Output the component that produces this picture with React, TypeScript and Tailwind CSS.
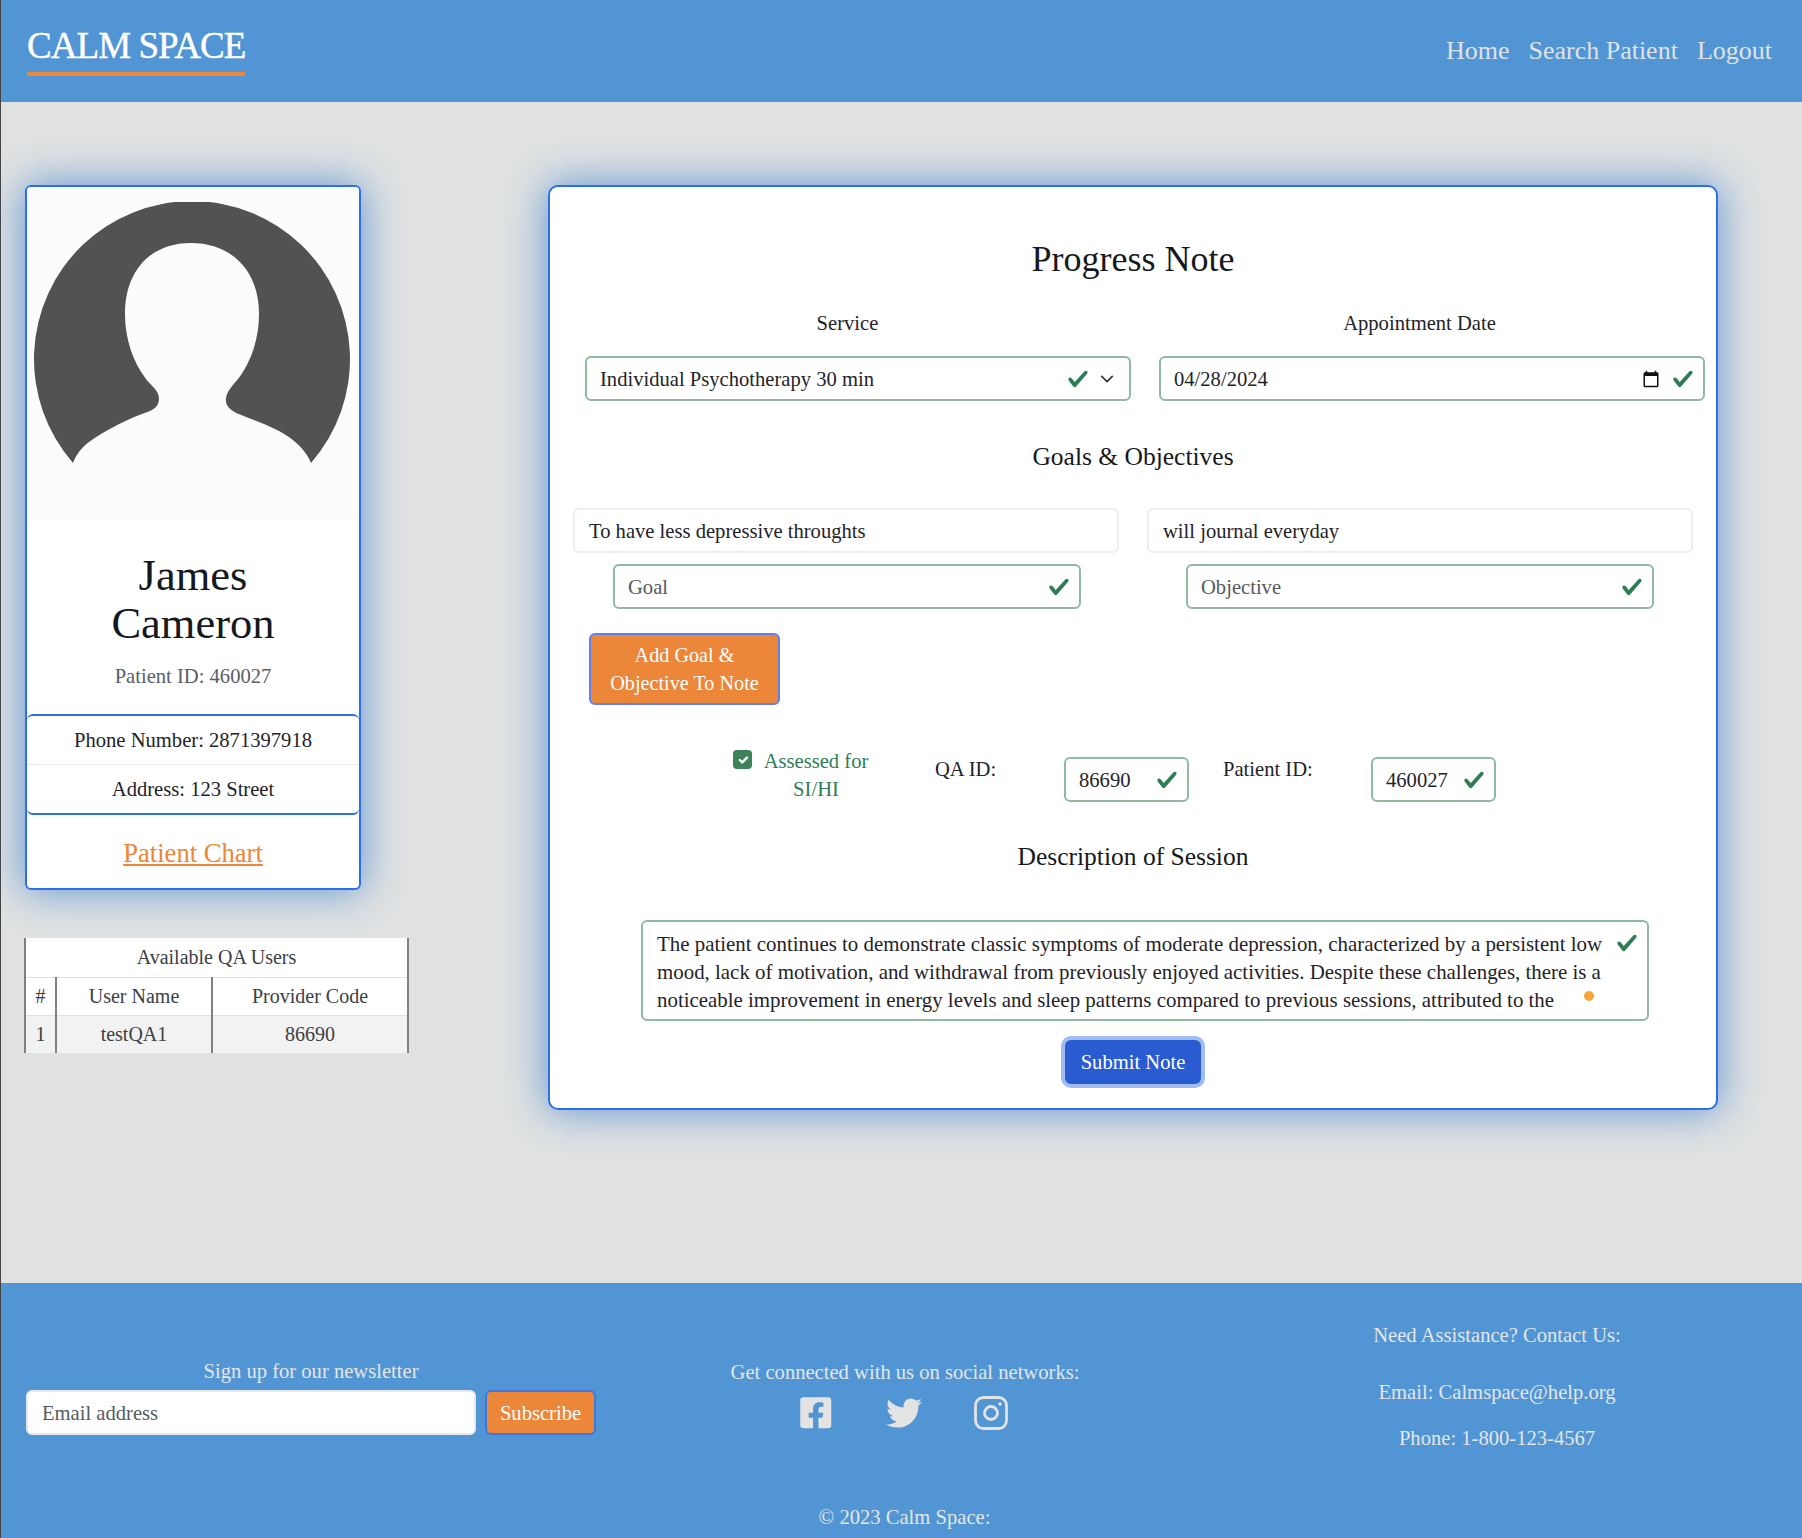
import { FaFacebookSquare, FaTwitter } from "react-icons/fa"

const Check = ({ className = "w-[22px] h-[22px]" }: { className?: string }) => (
  <svg viewBox="0 0 8 8" className={`shrink-0 fill-[#2f7d55] ${className}`}>
    <path d="M2.3 6.73.6 4.53c-.4-1.04.46-1.4 1.1-.8l1.1 1.4 3.4-3.8c.6-.63 1.6-.27 1.2.7l-4 4.6c-.43.5-.8.4-1.1.1z" />
  </svg>
)

const Field = ({ text, muted, className, children }: { text: string; muted?: boolean; className: string; children?: React.ReactNode }) => (
  <div className={`h-[45px] flex items-center justify-between pl-[13px] pr-[9px] bg-white border-2 border-[#8fb9a0] rounded-[6px] ${className}`}>
    <span className={`pt-[1px] ${muted ? "text-[#555b60]" : "text-[#1f2328]"}`}>{text}</span>
    {children ?? <Check />}
  </div>
)

const App = () => {
  return (
    <div className="w-full min-h-[1538px] flex flex-col border-l border-[#444444] bg-[#e0e2e2] font-['Liberation_Serif',serif] text-[20.6px] leading-[28px] text-[#1f2328]">
      <header className="h-[102px] shrink-0 flex justify-between bg-[#5295d4] pl-[26px] pr-[30px]">
        <div className="h-[76px] flex items-end border-b-[4px] border-[#ec8638]">
          <span className="text-[37px] leading-[44px] mb-[4px] tracking-[-0.95px] text-white [-webkit-text-stroke:0.4px_white]">CALM SPACE</span>
        </div>
        <nav className="flex items-center gap-[19px] text-[26px] text-[#dfe3e6] -mt-[1px]">
          <span>Home</span>
          <span>Search Patient</span>
          <span>Logout</span>
        </nav>
      </header>

      <main className="flex-1 flex items-start pt-[83px] pl-[23px]">
        <div className="w-[385px] shrink-0">
          <div className="ml-[1px] w-[336px] h-[705px] bg-white border-2 border-[#2b70e8] rounded-[6px] shadow-[0_0_42px_rgba(40,115,205,0.72)] flex flex-col">
            <div className="h-[332px] bg-[#fcfcfc] rounded-t-[4px] flex justify-center pt-[15px] pr-[2px] shrink-0">
              <svg viewBox="0 0 316 262" className="w-[316px] h-[262px]">
                <path
                  fill="#525252"
                  d="M39 261A158 158 0 1 1 277 261C273 250 262 238 245 229C230 221 214 216 202 211C195 207 191 203 192 196C193 189 199 183 204 177C217 160 225 137 225 112C225 68 197 41 157 41C117 41 91 68 91 112C91 137 99 160 112 177C117 184 125 188 125 197C125 204 120 207 116 209C95 216 70 229 55 240C47 246 42 253 39 261Z"
                />
              </svg>
            </div>
            <div className="flex-1 flex flex-col items-center">
              <div className="text-[44.5px] leading-[48px] text-center text-[#15181c] mt-[32px] w-[200px]">James Cameron</div>
              <div className="text-[#5a6066] mt-[15px]">Patient ID: 460027</div>
              <div className="w-full mt-[24px] border-y-2 border-[#2b70e8] rounded-[6px] text-center">
                <div className="h-[49px] flex items-center justify-center border-b border-[#e9ecef]">Phone Number: 2871397918</div>
                <div className="h-[48px] flex items-center justify-center">Address: 123 Street</div>
              </div>
              <a className="mt-[22px] text-[26.6px] leading-[32px] underline text-[#ec8638]">Patient Chart</a>
            </div>
          </div>

          <table className="relative mt-[48px] w-[385px] table-fixed border-collapse text-center text-[20px] text-[#3b4045] bg-white border-x-2 border-[#808080]">
            <colgroup>
              <col className="w-[31px]" />
              <col className="w-[156px]" />
              <col />
            </colgroup>
            <thead>
              <tr className="h-[39px] border-b border-[#dee2e6]">
                <th colSpan={3} className="font-normal">Available QA Users</th>
              </tr>
              <tr className="h-[38px] border-b border-[#dee2e6]">
                <th className="font-normal border-r-2 border-[#808080]">#</th>
                <th className="font-normal border-r-2 border-[#808080]">User Name</th>
                <th className="font-normal">Provider Code</th>
              </tr>
            </thead>
            <tbody>
              <tr className="h-[38px] bg-[#f2f2f2]">
                <td className="border-r-2 border-[#808080]">1</td>
                <td className="border-r-2 border-[#808080]">testQA1</td>
                <td>86690</td>
              </tr>
            </tbody>
          </table>
        </div>

        <section className="ml-[139px] w-[1170px] h-[925px] shrink-0 bg-white border-2 border-[#2b70e8] rounded-[10px] shadow-[0_0_42px_rgba(40,115,205,0.72)] pt-[50px]">
          <h1 className="text-center text-[36px] leading-[44px] text-[#15181c]">Progress Note</h1>

          <div className="flex mt-[28px] text-center">
            <div className="w-[570px] pl-[25px]">Service</div>
            <div className="ml-[27px] w-[545px]">Appointment Date</div>
          </div>

          <div className="flex gap-[28px] mt-[19px] ml-[35px]">
            <Field text="Individual Psychotherapy 30 min" className="w-[546px]">
              <span className="flex items-center gap-[11px] pr-[6px]">
                <Check />
                <svg viewBox="0 0 16 16" className="w-[14px] h-[14px] fill-none stroke-[#343a40] stroke-2">
                  <path strokeLinecap="round" strokeLinejoin="round" d="m2 5 6 6 6-6" />
                </svg>
              </span>
            </Field>
            <Field text="04/28/2024" className="w-[546px]">
              <span className="flex items-center gap-[12px]">
                <svg viewBox="0 0 24 24" className="w-[18px] h-[18px] fill-[#111111]">
                  <path d="M20 3h-1V1h-2v2H7V1H5v2H4c-1.1 0-2 .9-2 2v16c0 1.1.9 2 2 2h16c1.1 0 2-.9 2-2V5c0-1.1-.9-2-2-2zm0 18H4V8h16v13z" />
                </svg>
                <Check />
              </span>
            </Field>
          </div>

          <h2 className="text-center text-[25.5px] leading-[32px] mt-[40px] text-[#15181c]">Goals &amp; Objectives</h2>

          <div className="flex gap-[28px] mt-[35px] ml-[23px]">
            <div className="w-[546px] h-[45px] flex items-center pl-[14px] border-2 border-[#eeeeee] rounded-[6px]">To have less depressive throughts</div>
            <div className="w-[546px] h-[45px] flex items-center pl-[14px] border-2 border-[#eeeeee] rounded-[6px]">will journal everyday</div>
          </div>

          <div className="flex gap-[105px] mt-[11px] ml-[63px]">
            <Field text="Goal" muted className="w-[468px]" />
            <Field text="Objective" muted className="w-[468px]" />
          </div>

          <button className="block ml-[39px] mt-[24px] w-[191px] h-[72px] px-[12px] bg-[#ec8638] border-2 border-[#5e80e8] rounded-[6px] text-white text-[20.2px] leading-[28px]">
            Add Goal &amp; Objective To Note
          </button>

          <div className="flex items-start mt-[42px] ml-[183px]">
            <span className="w-[19px] h-[19px] mt-[3px] flex items-center justify-center rounded-[4px] bg-[#3f8158]">
              <svg viewBox="0 0 20 20" className="w-[16px] h-[16px] fill-none stroke-white stroke-[3]">
                <path strokeLinecap="round" strokeLinejoin="round" d="m6 10 3 3 6-6" />
              </svg>
            </span>
            <div className="w-[126px] ml-[1px] text-center text-[#2f7d55]">Assessed for SI/HI</div>
            <div className="ml-[56px] w-[129px] mt-[8px]">QA ID:</div>
            <Field text="86690" className="w-[125px] mt-[10px]" />
            <div className="ml-[34px] w-[148px] mt-[8px]">Patient ID:</div>
            <Field text="460027" className="w-[125px] mt-[10px]" />
          </div>

          <h2 className="text-center text-[25.5px] leading-[32px] mt-[38px] text-[#15181c]">Description of Session</h2>

          <div className="relative w-[1008px] h-[101px] ml-[91px] mt-[47px] pl-[14px] pr-[38px] pt-[8px] border-2 border-[#8fb9a0] rounded-[6px] overflow-hidden text-[20.9px]">
            <p className="h-[84px] w-[950px] overflow-hidden">
              The patient continues to demonstrate classic symptoms of moderate depression, characterized by a persistent low mood, lack of motivation, and withdrawal from previously enjoyed activities. Despite these challenges, there is a noticeable improvement in energy levels and sleep patterns compared to previous sessions, attributed to the
            </p>
            <span className="absolute right-[9px] top-[10px]"><Check /></span>
            <span className="absolute right-[53px] bottom-[18px] w-[10px] h-[10px] rounded-full bg-[#f5a63b]" />
          </div>

          <div className="flex justify-center mt-[19px]">
            <button className="w-[136px] h-[44px] bg-[#2a5bd0] rounded-[6px] text-white ring-4 ring-[#9fbcf5]">Submit Note</button>
          </div>
        </section>
      </main>

      <footer className="h-[255px] shrink-0 bg-[#5295d4] text-[#e3e6e8]">
        <div className="flex h-[220px]">
          <div className="w-[595px] pl-[25px] pt-[74px]">
            <div className="text-center w-[570px]">Sign up for our newsletter</div>
            <div className="flex gap-[9px] mt-[5px]">
              <div className="w-[450px] h-[45px] flex items-center pl-[14px] bg-white rounded-[6px] border-2 border-[#e6e8ea] text-[#555b60]">Email address</div>
              <button className="w-[111px] h-[45px] bg-[#ec8638] border-2 border-[#3f77df] rounded-[6px] text-white">Subscribe</button>
            </div>
          </div>
          <div className="w-[618px] pt-[75px] text-center">
            <div>Get connected with us on social networks:</div>
            <div className="flex justify-center items-center gap-[52px] mt-[9px] mr-[4px] text-[#e3e3e3]">
              <FaFacebookSquare className="text-[35.5px]" />
              <FaTwitter className="text-[36px]" />
              <svg viewBox="0 0 34 34" className="w-[34px] h-[34px] fill-none stroke-current stroke-[2.8]">
                <rect x="1.5" y="1.5" width="31" height="31" rx="8" />
                <circle cx="17" cy="17" r="6.5" />
                <circle cx="26" cy="8" r="1.8" className="fill-current stroke-none" />
              </svg>
            </div>
          </div>
          <div className="flex-1 pt-[38px] text-center pr-[22px]">
            <div>Need Assistance? Contact Us:</div>
            <div className="mt-[29px]">Email: Calmspace@help.org</div>
            <div className="mt-[18px]">Phone: 1-800-123-4567</div>
          </div>
        </div>
        <div className="text-center pl-[6px]">© 2023 Calm Space:</div>
      </footer>
    </div>
  )
}

export default App
